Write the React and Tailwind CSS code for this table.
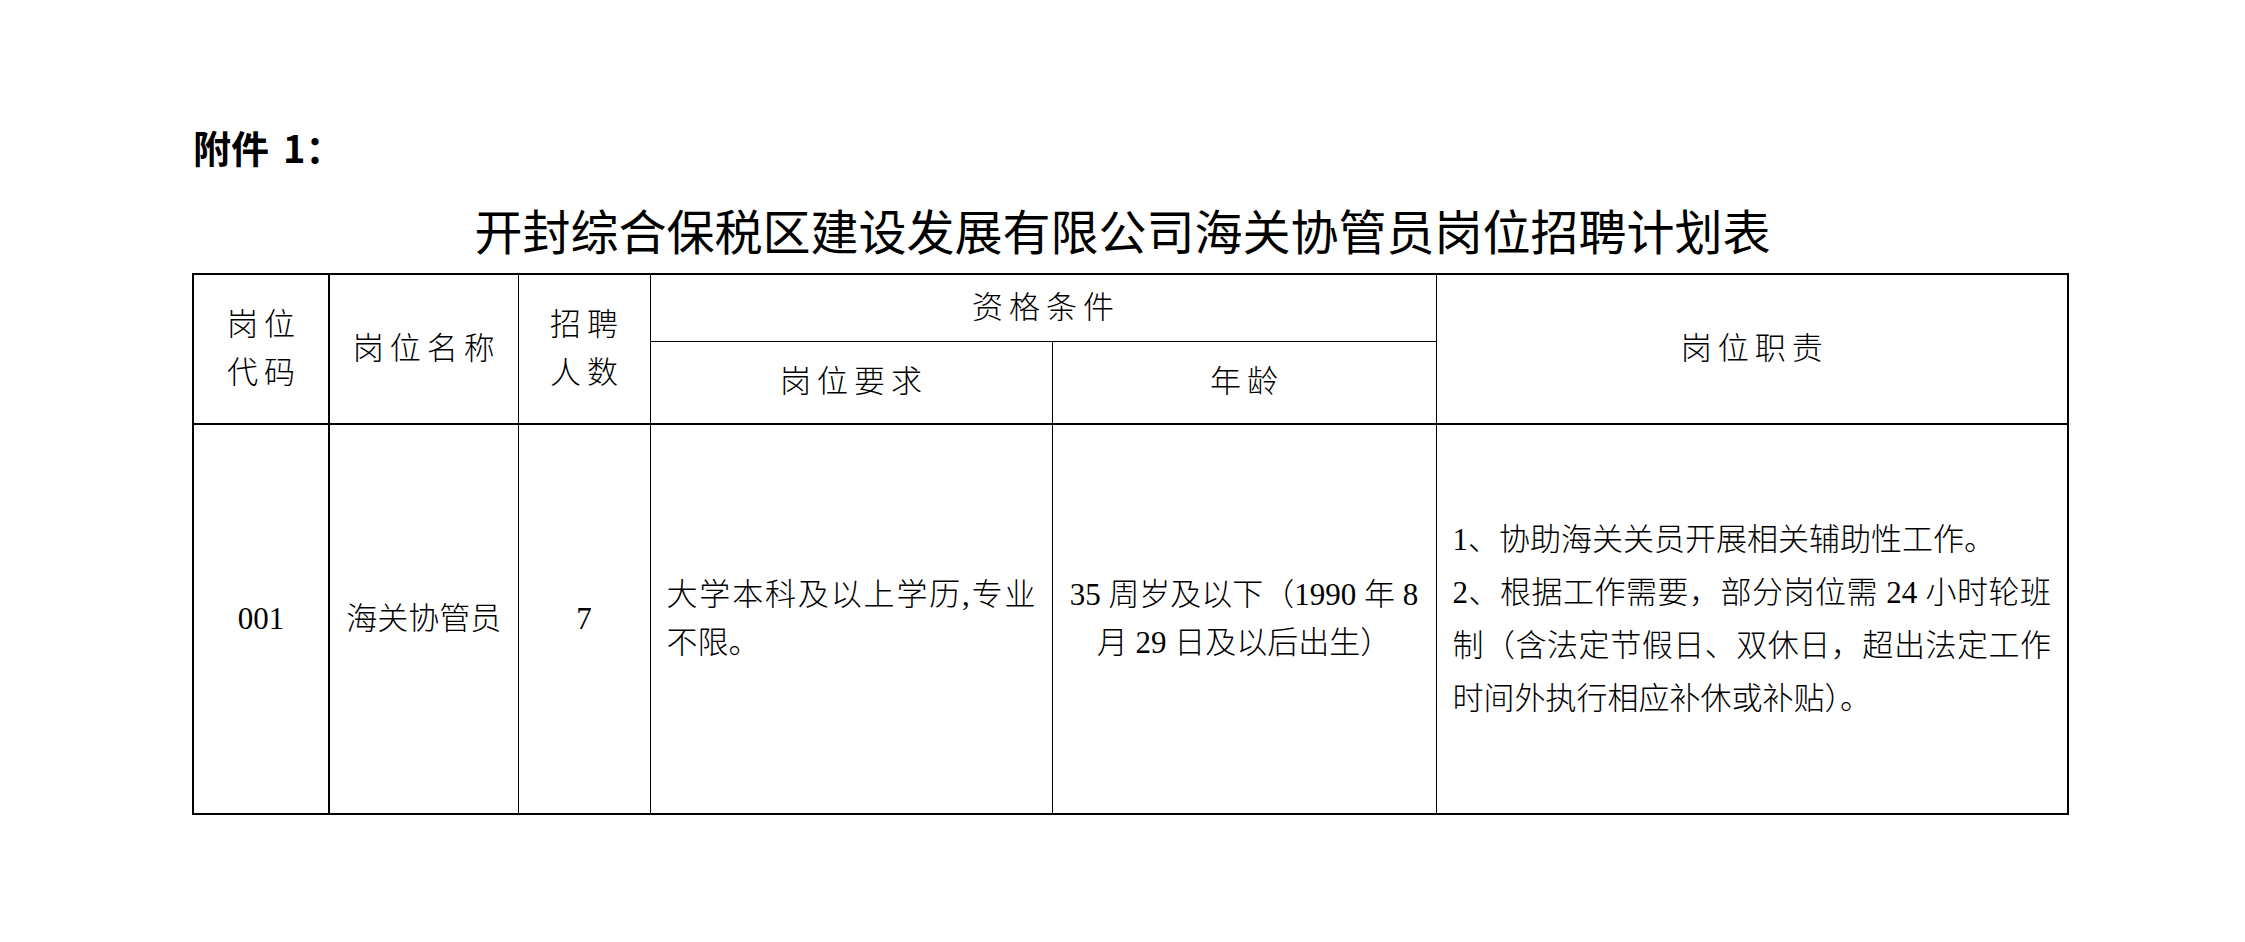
import React from "react";

const serif = "font-['Liberation_Serif','Noto_Sans_CJK_SC',serif]";

export default function App() {
  const th =
    "border border-black text-center align-middle text-[31px] leading-[48px] tracking-[6px] pl-[6px] font-light text-black";
  const td = "border border-black align-middle text-[31px] font-light text-black";

  return (
    <div className={`w-[2245px] h-[942px] bg-white overflow-hidden ${serif}`}>
      <div className="pt-[127px] pl-[193px] text-[38px] leading-[40px] font-bold font-['Noto_Sans_CJK_SC',sans-serif] text-black">
        附件<span className="pl-[14px]">1：</span>
      </div>

      <div className="mt-[37px] text-center text-[48px] leading-[50px] font-['Noto_Sans_CJK_SC',sans-serif] text-black">
        开封综合保税区建设发展有限公司海关协管员岗位招聘计划表
      </div>

      <table className="mt-[19px] ml-[192px] w-[1875px] table-fixed border-collapse border-2 border-black">
        <colgroup>
          <col className="w-[136px]" />
          <col className="w-[189px]" />
          <col className="w-[132px]" />
          <col className="w-[402px]" />
          <col className="w-[384px]" />
          <col className="w-[632px]" />
        </colgroup>
        <tbody>
          <tr className="h-[67px]">
            <td rowSpan={2} className={`${th} border-r-2`}>
              岗位
              <br />
              代码
            </td>
            <td rowSpan={2} className={th}>
              岗位名称
            </td>
            <td rowSpan={2} className={th}>
              招聘
              <br />
              人数
            </td>
            <td colSpan={2} className={th}>
              资格条件
            </td>
            <td rowSpan={2} className={th}>
              岗位职责
            </td>
          </tr>
          <tr className="h-[83px]">
            <td className={th}>岗位要求</td>
            <td className={th}>年龄</td>
          </tr>
          <tr className="h-[390px] border-t-2 border-black">
            <td className={`${td} border-r-2 text-center`}>001</td>
            <td className={`${td} text-center`}>海关协管员</td>
            <td className={`${td} text-center`}>7</td>
            <td className={`${td} px-[16px] leading-[48px]`}>
              <div className="whitespace-nowrap text-justify [text-align-last:justify]">
                大学本科及以上学历,专业
              </div>
              <div>不限。</div>
            </td>
            <td className={`${td} px-[12px] leading-[48px] text-center`}>
              <div className="whitespace-nowrap">35 周岁及以下（1990 年 8</div>
              <div className="whitespace-nowrap">月 29 日及以后出生）</div>
            </td>
            <td className={`${td} px-[16px] leading-[53px]`}>
              <div className="whitespace-nowrap">1、协助海关关员开展相关辅助性工作。</div>
              <div className="whitespace-nowrap text-justify [text-align-last:justify]">
                2、根据工作需要，部分岗位需 24 小时轮班
              </div>
              <div className="whitespace-nowrap text-justify [text-align-last:justify]">
                制（含法定节假日、双休日，超出法定工作
              </div>
              <div className="whitespace-nowrap">时间外执行相应补休或补贴）。</div>
            </td>
          </tr>
        </tbody>
      </table>
    </div>
  );
}
